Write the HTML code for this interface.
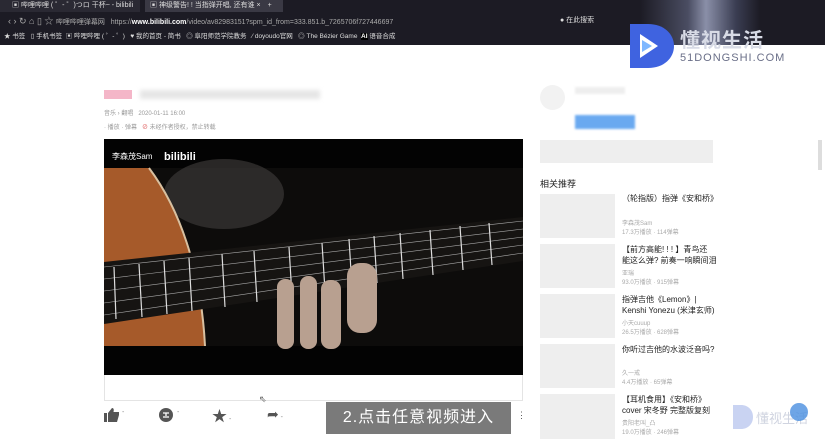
<!DOCTYPE html><html><head><meta charset="utf-8"><style>
*{margin:0;padding:0;box-sizing:border-box}
body{width:825px;height:439px;overflow:hidden;background:#fff;font-family:"Liberation Sans","Noto Sans CJK SC",sans-serif;position:relative;font-size:9px;color:#222}
.a{position:absolute}
.top{left:0;top:0;width:825px;height:45px;background:#1c1b24}
.tab{top:0;height:12px;color:#ddd;font-size:7px;line-height:12px}
.g{background:#eee}
.r{font-size:8px;color:#222;line-height:11px}
.m{font-size:6px;color:#aaa}
.ic span{font-size:7px;color:#888}
</style></head><body>
<div class="a top"></div>
<div class="a" style="left:0;top:0;width:140px;height:12px;background:#2a2933"></div>
<div class="a tab" style="left:12px">▣ 哔哩哔哩 ( ゜- ゜)つロ 干杯~ - bilibili</div>
<div class="a" style="left:145px;top:0;width:138px;height:12px;background:#3a3944"></div>
<div class="a tab" style="left:150px">▣ 神级警告! ! 当指弹开唱, 还有谁 ×　+</div>
<div class="a" style="left:640px;top:0;width:120px;height:45px;background:linear-gradient(90deg,#1c1b24,#4a4d62 40%,#8a8fa8 55%,#3a3d52 80%,#1c1b24)"></div>
<div class="a tab" style="left:8px;top:13px;font-size:9px;color:#aaa;line-height:16px">‹ › ↻ ⌂ ▯ ☆ <span style="font-size:7px">哔哩哔哩弹幕网 &nbsp; https://<b style="color:#fff">www.bilibili.com</b>/video/av82983151?spm_id_from=333.851.b_7265706f727446697</span></div>
<div class="a tab" style="left:560px;top:13px;line-height:16px;font-size:7px">● 在此搜索</div>
<div class="a tab" style="left:4px;top:31px;line-height:12px;font-size:6.5px">★ 书签 &nbsp; ▯ 手机书签 &nbsp;▣ 哔哩哔哩 ( ゜- ゜) &nbsp; ♥ 我的首页 - 简书 &nbsp; ◎ 阜阳师范学院教务 &nbsp; ∕ doyoudo官网 &nbsp; ◎ The Bézier Game &nbsp;<b style="background:#000;color:#fff">AI</b> 语音合成</div>
<svg class="a" style="left:628px;top:22px" width="50" height="48" viewBox="0 0 50 48"><path d="M2 2h18c16 0 26 10 26 22s-10 22-26 22H2z" fill="#3f63e0"/><path d="M12 12l18 12-18 12z" fill="#fff"/><path d="M14 18l10 6-10 6z" fill="#7fb8ff"/></svg>
<div class="a" style="left:680px;top:24px;font-size:20px;color:#d8dbe6;font-weight:bold;letter-spacing:1px">懂视生活</div>
<div class="a" style="left:680px;top:52px;font-size:11px;color:#6a6f88;letter-spacing:1px">51DONGSHI.COM</div>
<div class="a" style="left:104px;top:90px;width:28px;height:9px;background:#f4b6c8"></div>
<div class="a" style="left:140px;top:90px;width:180px;height:9px;background:#e6e6e6;filter:blur(2px)"></div>
<div class="a" style="left:104px;top:108px;font-size:6px;color:#999">音乐 › 翻唱 &nbsp; 2020-01-11 16:00</div>
<div class="a" style="left:104px;top:122px;font-size:6px;color:#999">· 播放 · 弹幕 &nbsp; <span style="color:#d55">⊘</span> 未经作者授权，禁止转载</div>
<div class="a" style="left:540px;top:85px;width:25px;height:25px;border-radius:50%;background:#f2f2f2"></div>
<div class="a" style="left:575px;top:87px;width:50px;height:7px;background:#eee;filter:blur(1px)"></div>
<div class="a" style="left:575px;top:115px;width:60px;height:14px;background:#6aa9f0;filter:blur(1px)"></div>
<div class="a" style="left:104px;top:139px;width:419px;height:262px;border:1px solid #e4e4e4"></div>
<svg class="a" style="left:104px;top:139px" width="419" height="236" viewBox="0 0 419 236">
<rect width="419" height="236" fill="#030303"/>
<rect y="29" width="419" height="178" fill="#0d0c0b"/>
<ellipse cx="120" cy="55" rx="60" ry="35" fill="#3a3836" opacity=".7"/>
<path d="M0 29h45c30 40 52 100 56 178H0z" fill="#a65a2a"/>
<path d="M45 29c30 40 52 100 56 178" stroke="#d8c0a0" stroke-width="2" fill="none"/>
<path d="M0 123L419 78V122L0 185z" fill="#161412"/>
<g stroke="#aaa" stroke-width=".6"><line x1="0" y1="128" x2="419" y2="82"/><line x1="0" y1="140" x2="419" y2="90"/><line x1="0" y1="152" x2="419" y2="98"/><line x1="0" y1="164" x2="419" y2="106"/><line x1="0" y1="176" x2="419" y2="114"/></g>
<g stroke="#ddd" stroke-width="1.2"><line x1="10" y1="128" x2="12" y2="180"/><line x1="35" y1="125" x2="38" y2="178"/><line x1="60" y1="122" x2="63" y2="175"/><line x1="85" y1="119" x2="88" y2="172"/><line x1="118" y1="115" x2="121" y2="168"/><line x1="150" y1="112" x2="153" y2="163"/><line x1="185" y1="108" x2="188" y2="157"/><line x1="218" y1="104" x2="221" y2="152"/><line x1="245" y1="100" x2="248" y2="148"/><line x1="270" y1="97" x2="273" y2="144"/><line x1="296" y1="94" x2="299" y2="140"/><line x1="326" y1="91" x2="329" y2="136"/><line x1="356" y1="87" x2="359" y2="131"/><line x1="385" y1="84" x2="388" y2="126"/></g>
<g fill="#b8a090"><rect x="173" y="140" width="17" height="70" rx="8"/><rect x="196" y="137" width="17" height="73" rx="8"/><rect x="217" y="141" width="20" height="69" rx="9"/><rect x="243" y="124" width="30" height="70" rx="13"/></g>
<text x="8" y="20" fill="#fff" font-size="8" font-family="Liberation Sans,Noto Sans CJK SC,sans-serif">李森茂Sam</text>
<text x="60" y="21" fill="#fff" font-size="11" font-weight="bold" font-family="Liberation Sans,sans-serif">bilibili</text>
</svg>
<div class="a" style="left:259px;top:394px;font-size:9px;color:#555">⇖</div>
<svg class="a" style="left:104px;top:408px" width="16" height="14" viewBox="0 0 16 14"><rect x="0" y="5" width="3" height="9" fill="#555"/><path d="M4 5l4-5c2 0 2 2 1.5 4H15v3l-2 7H4z" fill="#555"/></svg>
<div class="a ic" style="left:122px;top:409px;font-size:7px;color:#888">-</div>
<svg class="a" style="left:159px;top:408px" width="14" height="14" viewBox="0 0 14 14"><circle cx="7" cy="7" r="7" fill="#555"/><path d="M4 5h6M7 5v5M5 8v2M9 8v2" stroke="#fff" stroke-width="1.3"/></svg>
<div class="a ic" style="left:177px;top:409px;font-size:7px;color:#888">-</div>
<div class="a ic" style="left:212px;top:405px;font-size:15px;color:#555">★<span> -</span></div>
<div class="a ic" style="left:267px;top:406px;font-size:14px;color:#555">➦<span> -</span></div>
<div class="a" style="left:326px;top:402px;width:185px;height:32px;background:#7a7a7a;color:#fff;font-size:16px;line-height:32px;text-align:center;letter-spacing:1px">2.点击任意视频进入</div>
<div class="a" style="left:517px;top:410px;color:#555">⋮</div>
<div class="a g" style="left:540px;top:140px;width:173px;height:23px"></div>
<div class="a" style="left:540px;top:177px;font-size:9px;color:#222">相关推荐</div>
<div class="a g" style="left:540px;top:194px;width:75px;height:44px"></div>
<div class="a r" style="left:622px;top:193px">（轮指版）指弹《安和桥》</div>
<div class="a m" style="left:622px;top:218px">李森茂Sam<br>17.3万播放 · 114弹幕</div>
<div class="a g" style="left:540px;top:244px;width:75px;height:44px"></div>
<div class="a r" style="left:622px;top:244px">【前方高能! ! ! 】青鸟还<br>能这么弹? 前奏一响瞬间泪</div>
<div class="a m" style="left:622px;top:268px">亚瑞<br>93.0万播放 · 915弹幕</div>
<div class="a g" style="left:540px;top:294px;width:75px;height:44px"></div>
<div class="a r" style="left:622px;top:294px">指弹吉他《Lemon》|<br>Kenshi Yonezu (米津玄师)</div>
<div class="a m" style="left:622px;top:318px">小天cuuup<br>26.5万播放 · 628弹幕</div>
<div class="a g" style="left:540px;top:344px;width:75px;height:44px"></div>
<div class="a r" style="left:622px;top:344px">你听过吉他的水波泛音吗?</div>
<div class="a m" style="left:622px;top:368px">久一戒<br>4.4万播放 · 65弹幕</div>
<div class="a g" style="left:540px;top:394px;width:75px;height:45px"></div>
<div class="a r" style="left:622px;top:394px">【耳机食用】《安和桥》<br>cover 宋冬野 完整版复刻</div>
<div class="a m" style="left:622px;top:418px">贵阳老叫_凸<br>19.0万播放 · 246弹幕</div>
<div class="a" style="left:818px;top:140px;width:4px;height:30px;background:#ddd"></div>
<svg class="a" style="left:732px;top:404px" width="22" height="26" viewBox="0 0 22 26"><path d="M1 1h8c7 0 12 5 12 12s-5 12-12 12H1z" fill="#c9d3f2"/></svg>
<div class="a" style="left:756px;top:408px;font-size:13px;color:#d0d4e0">懂视生活</div>
<div class="a" style="left:790px;top:403px;width:18px;height:18px;border-radius:50%;background:#4a8fe0;opacity:.8"></div>
</body></html>
